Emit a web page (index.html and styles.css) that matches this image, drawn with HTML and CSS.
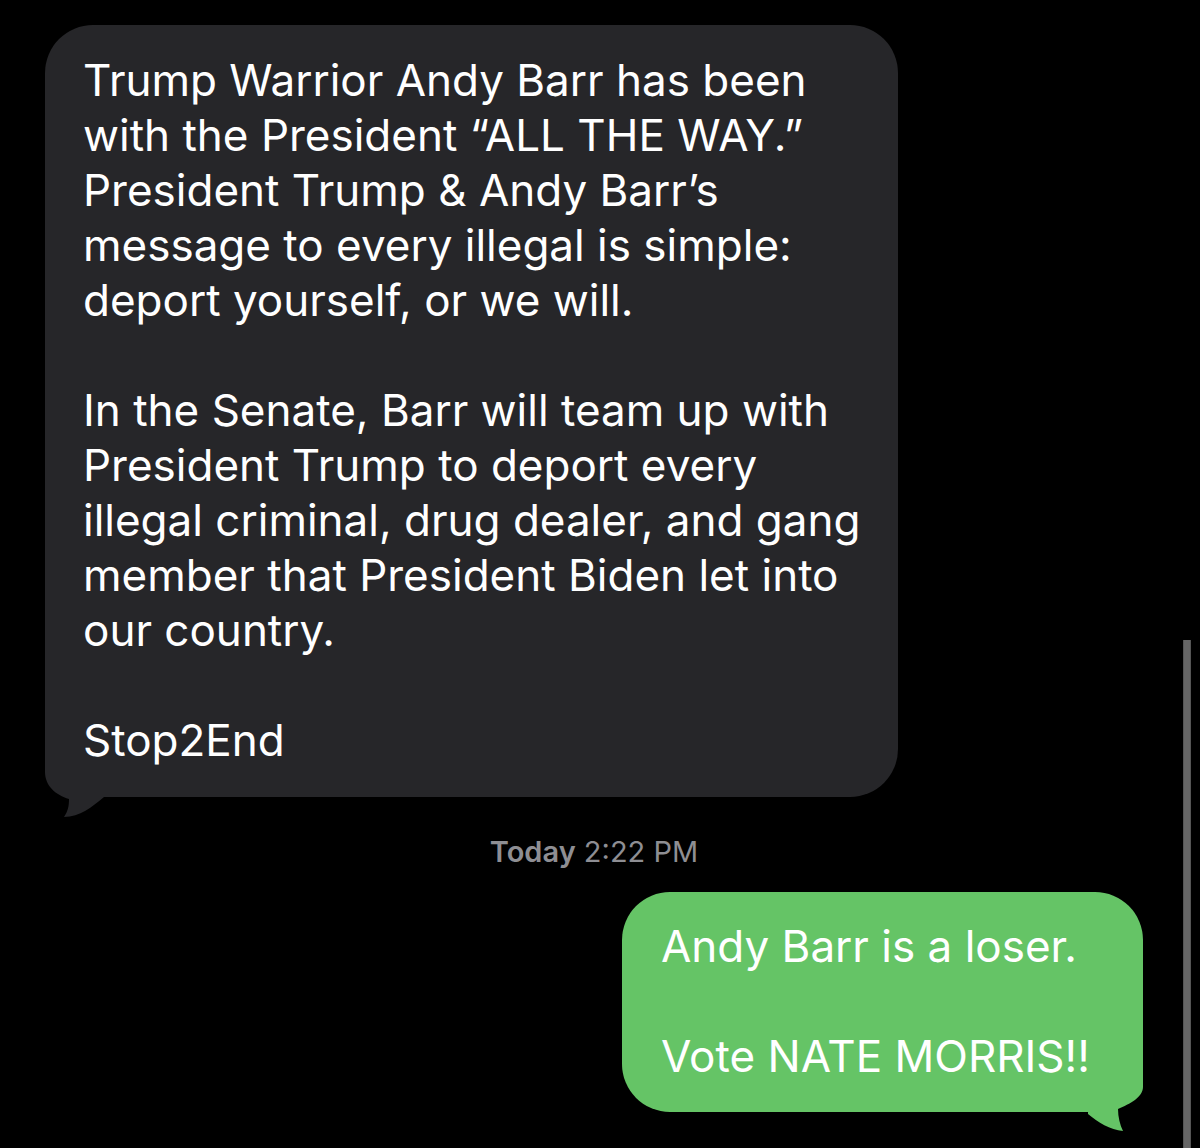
FILE: index.html
```html
<!DOCTYPE html>
<html lang="en">
<head>
<meta charset="utf-8">
<title>Messages</title>
<link rel="stylesheet" href="styles.css">
</head>
<body>
<div class="screen">
  <div class="thread">
    <div class="bubble bubble-in">
      <svg class="tail tail-in" width="70" height="80" viewBox="0 0 70 80" aria-hidden="true">
        <path d="M5,0 L5,25 C5,39 16,48 29,52 C29,59 28,64 24,70 C40,70 52,60 64,50 L64,0 Z" fill="#262629"/>
      </svg>
      <p class="msg">Trump Warrior Andy Barr has been<br>with the President “ALL THE WAY.”<br>President Trump &amp; Andy Barr’s<br>message to every illegal is simple:<br>deport yourself, or we will.</p>
      <p class="msg">In the Senate, Barr will team up with<br>President Trump to deport every<br>illegal criminal, drug dealer, and gang<br>member that President Biden let into<br>our country.</p>
      <p class="msg">Stop2End</p>
    </div>

    <div class="timestamp"><span class="ts-day">Today</span> 2:22 PM</div>

    <div class="bubble bubble-out">
      <svg class="tail tail-out" width="70" height="80" viewBox="0 0 70 80" aria-hidden="true">
        <path d="M65,0 L65,25 C65,35 52,42 40,47 C40,55 42,63 45,69 C32,68 20,60 10,52 L10,0 Z" fill="#65c466"/>
      </svg>
      <p class="msg">Andy Barr is a loser.</p>
      <p class="msg">Vote NATE MORRIS!!</p>
    </div>
  </div>
  <div class="scrollbar"></div>
</div>
</body>
</html>
```

FILE: styles.css
```css
* {
  box-sizing: border-box;
}

html, body {
  margin: 0;
  padding: 0;
  background: #000;
}

body {
  font-family: Inter, "Open Sans", "Liberation Sans", sans-serif;
  color: #fff;
}

.screen {
  position: relative;
  width: 1200px;
  height: 1148px;
  overflow: hidden;
  background: #000;
}

.thread {
  display: flex;
  flex-direction: column;
  padding-top: 25px;
}

.bubble {
  position: relative;
  border-radius: 48px;
}

.bubble-in {
  align-self: flex-start;
  margin-left: 45px;
  width: 853px;
  height: 772px;
  padding: 28px 20px 0 38px;
  background: #262629;
}

.bubble-out {
  align-self: flex-end;
  margin-right: 57px;
  width: 521px;
  height: 220px;
  padding: 27px 20px 0 39px;
  background: #65c466;
}

.msg {
  position: relative;
  z-index: 1;
  margin: 0 0 55px 0;
  font-size: 44px;
  line-height: 55px;
  letter-spacing: 0;
  color: #fff;
}

.msg:last-of-type {
  margin-bottom: 0;
}

.tail {
  position: absolute;
  display: block;
  z-index: 0;
}

.tail-in {
  left: -5px;
  top: 722px;
}

.tail-out {
  right: -5px;
  top: 170px;
}

.timestamp {
  align-self: center;
  margin: 38px 12px 0 0;
  height: 57px;
  font-size: 29px;
  line-height: 34px;
  color: #8e8e93;
}

.ts-day {
  font-weight: 600;
}

.scrollbar {
  position: absolute;
  left: 1183px;
  top: 640px;
  width: 8px;
  height: 508px;
  background: #666;
  border-left: 1px solid #555;
  border-right: 1px solid #555;
}
```
